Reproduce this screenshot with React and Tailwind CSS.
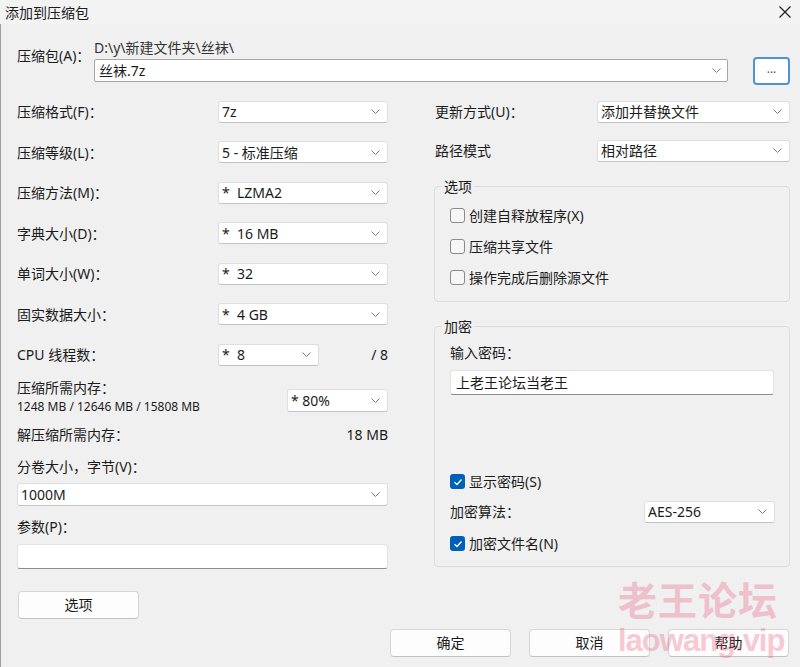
import React from "react";

function Chevron() {
  return (
    <svg width="9" height="5" viewBox="0 0 9 5" className="shrink-0">
      <path d="M0.5 0.5L4.5 4.5L8.5 0.5" fill="none" stroke="#7a7a7a" strokeWidth="1" />
    </svg>
  );
}

function Select({ value, className = "" }) {
  return (
    <div
      className={
        "flex h-[22px] items-center justify-between rounded-[3px] border border-[#dedede] border-b-[#c4c4c4] bg-white pl-[3px] pr-[7px] " +
        className
      }
    >
      <span className="whitespace-pre">{value}</span>
      <Chevron />
    </div>
  );
}

function TextBox({ value = "", className = "" }) {
  return (
    <div
      className={
        "flex items-center rounded-[3px] border border-[#e3e3e3] border-b-[#8c8c8c] bg-white px-[5px] " +
        className
      }
    >
      {value}
    </div>
  );
}

function Button({ children, className = "" }) {
  return (
    <button
      className={
        "flex h-[28px] w-[121px] items-center justify-center rounded-[4px] border border-[#d6d6d6] border-b-[#c2c2c2] bg-[#fdfdfd] text-[14px] " +
        className
      }
    >
      {children}
    </button>
  );
}

function Check({ checked, label }) {
  return (
    <div className="flex h-[19px] items-center gap-[4px]">
      {checked ? (
        <span className="flex h-[15px] w-[15px] items-center justify-center rounded-[3px] bg-[#005fb8]">
          <svg width="10" height="8" viewBox="0 0 10 8">
            <path d="M1.5 4.2L4 6.5L8.5 1.5" fill="none" stroke="white" strokeWidth="1.3" />
          </svg>
        </span>
      ) : (
        <span className="h-[15px] w-[15px] rounded-[3px] border border-[#8a8a8a] bg-[#f6f6f6]" />
      )}
      <span>{label}</span>
    </div>
  );
}

function Row({ label, value }) {
  return (
    <div className="flex h-[22px] items-center justify-between">
      <span>{label}</span>
      <Select value={value} className="w-[170px]" />
    </div>
  );
}

export default function App() {
  return (
    <div className="relative h-[667px] w-[800px] overflow-hidden bg-[#f0f0f0] font-['Noto_Sans','Noto_Sans_CJK_SC',sans-serif] text-[14px] leading-[19px] text-[#1b1b1b]">
      {/* title bar */}
      <div className="flex h-[24px] items-center justify-between bg-[#f3f3f3] pl-[5px] pr-[8px]">
        <span className="text-[14px]">添加到压缩包</span>
        <svg width="14" height="14" viewBox="0 0 14 14">
          <path d="M1.5 1.5L12.5 12.5M12.5 1.5L1.5 12.5" stroke="#202020" strokeWidth="1.2" />
        </svg>
      </div>

      <div className="flex h-[643px] flex-col border-l border-[#9e9e9e] pl-[16px] pr-[10px]">
        {/* archive path */}
        <div className="flex items-start pt-[13.5px]">
          <span className="mt-[8px] w-[77px]">压缩包(A)：</span>
          <div className="flex flex-col">
            <span className="text-[#333333]">D:\y\新建文件夹\丝袜\</span>
            <div className="flex h-[28px] items-center gap-[25px]">
              <div className="flex h-[23px] w-[634px] items-center justify-between rounded-[2px] border border-[#a6a6a6] bg-white pl-[4px] pr-[6px]">
                <span>丝袜.7z</span>
                <Chevron />
              </div>
              <button className="flex h-[28px] w-[37px] items-center justify-center rounded-[4px] border-2 border-[#4f92d6] bg-white pb-[4px] text-[12px] text-[#555555]">
                ...
              </button>
            </div>
          </div>
        </div>

        <div className="mt-[16px] grid grid-cols-[371px_356px] gap-x-[46px]">
          {/* left column */}
          <div className="flex flex-col">
            <div className="flex flex-col gap-[18.5px]">
              <Row label="压缩格式(F)：" value="7z" />
              <Row label="压缩等级(L)：" value="5 - 标准压缩" />
              <Row label="压缩方法(M)：" value="*  LZMA2" />
              <Row label="字典大小(D)：" value="*  16 MB" />
              <Row label="单词大小(W)：" value="*  32" />
              <Row label="固实数据大小：" value="*  4 GB" />
              <div className="flex h-[22px] items-center">
                <span className="w-[201px]">CPU 线程数：</span>
                <Select value="*  8" className="w-[101px]" />
                <span className="ml-auto">/ 8</span>
              </div>
            </div>

            <div className="mt-[12px] flex items-start justify-between">
              <div className="flex flex-col">
                <span>压缩所需内存：</span>
                <span className="text-[12px]">1248 MB / 12646 MB / 15808 MB</span>
              </div>
              <Select value="* 80%" className="mt-[11px] h-[23px] w-[101px]" />
            </div>

            <div className="mt-[9.5px] flex justify-between">
              <span>解压缩所需内存：</span>
              <span>18 MB</span>
            </div>

            <span className="mt-[13px]">分卷大小，字节(V)：</span>
            <Select value="1000M" className="mt-[6.5px] h-[23px] w-[371px]" />

            <span className="mt-[11.5px]">参数(P)：</span>
            <TextBox className="mt-[7.5px] h-[25px] w-[371px]" />

            <Button className="ml-[1px] mt-[22px]">选项</Button>
          </div>

          {/* right column */}
          <div className="flex flex-col">
            <div className="flex h-[22px] items-center justify-between">
              <span className="ml-[1px]">更新方式(U)：</span>
              <Select value="添加并替换文件" className="w-[193px]" />
            </div>
            <div className="mt-[17px] flex h-[22px] items-center justify-between">
              <span className="ml-[1px]">路径模式</span>
              <Select value="相对路径" className="w-[193px]" />
            </div>

            <fieldset className="mt-[15.5px] rounded-[4px] border border-[#dcdcdc] pb-[14px] pl-[15px] pr-[14px]">
              <legend className="-ml-[8px] px-[2px]">选项</legend>
              <div className="flex flex-col gap-[12px] pt-[9.5px]">
                <Check label="创建自释放程序(X)" />
                <Check label="压缩共享文件" />
                <Check label="操作完成后删除源文件" />
              </div>
            </fieldset>

            <fieldset className="mt-[15.5px] rounded-[4px] border border-[#dcdcdc] pb-[12.5px] pl-[15px] pr-[14px]">
              <legend className="-ml-[8px] px-[2px]">加密</legend>
              <span className="mt-[7px] block">输入密码：</span>
              <TextBox value="上老王论坛当老王" className="mt-[7.5px] h-[25px] w-[324px]" />
              <div className="mt-[77.5px]">
                <Check checked label="显示密码(S)" />
              </div>
              <div className="mt-[9.5px] flex h-[22px] items-center justify-between">
                <span>加密算法：</span>
                <Select value="AES-256" className="w-[131px]" />
              </div>
              <div className="mt-[11.5px]">
                <Check checked label="加密文件名(N)" />
              </div>
            </fieldset>
          </div>
        </div>

        {/* bottom buttons */}
        <div className="mt-[10px] flex justify-end gap-[18px] pr-[1px]">
          <Button>确定</Button>
          <Button>取消</Button>
          <Button>帮助</Button>
        </div>
      </div>

      {/* watermark */}
      <div className="pointer-events-none absolute left-[618px] top-[580px] flex flex-col leading-none text-[#e9547a] opacity-30">
        <span className="text-[39px] font-bold tracking-[1px]">老王论坛</span>
        <span className="mt-[6px] font-['Liberation_Sans',sans-serif] text-[31px] font-bold tracking-[-1px]">laowang.vip</span>
      </div>
    </div>
  );
}
